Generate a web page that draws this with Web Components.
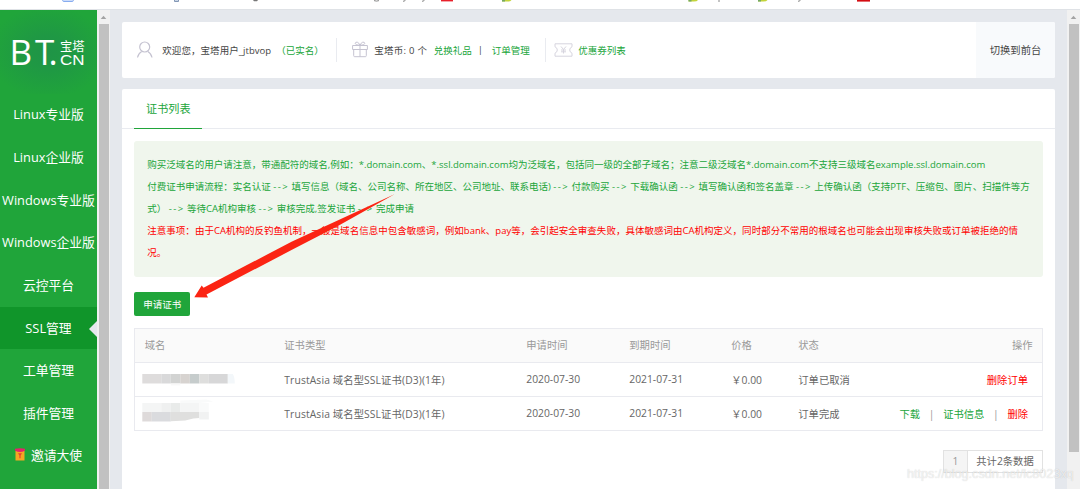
<!DOCTYPE html>
<html lang="zh-CN">
<head>
<meta charset="utf-8">
<title>SSL管理</title>
<style>
  html, body {
    margin: 0;
    height: 489px;
    overflow: hidden;
  }
  body {
    font-family: "Open Sans", "Noto Sans CJK SC", sans-serif;
    font-size: 9.5px;
    color: #444;
    background: #e5e8ed;
  }
</style>
</head>
<body>
<bt-app></bt-app>

<script>
const define = (name, html) => {
  const template = document.createElement("template");
  template.innerHTML = html;
  customElements.define(name, class extends HTMLElement {
    constructor() {
      super();
      this.attachShadow({ mode: "open" }).appendChild(template.content.cloneNode(true));
    }
  });
};

// Bottom edge of the browser's bookmark bar
define("bookmark-strip", `
  <style>
    :host { display: block; height: 9px; background: #fff; border-bottom: 1px solid #dfe2e6; }
    svg { display: block; }
  </style>
  <svg width="1080" height="9" viewBox="0 0 1080 9" fill="none">
    <path d="M62.7 0v.6q0 .8 1 .8h8.6q1 0 1-.8V0" fill="#d6e4fb" stroke="#7ba4ee"/>
    <path d="M174.5 0v1.5h4V0" fill="#c9d5e5" stroke="#8397b5"/>
    <path d="M253 0h5l-1 1.3h-3z" fill="#777"/>
    <path d="M374 .6q2.5 1 5 0M403 1.2q2 .4 2.2-1.2M422 1.2q2 .4 2.2-1.2M719 0v2M798 1.2q2 .4 2.2-1.2" stroke="#888"/>
    <path d="M441 0h12v1.4h-12z" fill="#e8202a"/>
    <path d="M502 0h9.500q-1 1.600-4 1.600h-5.500zM688.500 0h9.500q-1 1.600-4 1.600h-5.500zM758 0h9.500q-1 1.600-4 1.600h-5.500z" fill="#c3d43a"/>
    <path d="M502 0h3v1.600h-3zM688.500 0h3v1.600h-3zM758 0h3v1.600h-3z" fill="#74a864"/>
    <path d="M857 0h13v1.600h-13z" fill="#d40c12"/>
  </svg>
`);

define("scroll-bar", `
  <style>
    :host {
      display: flex;
      flex-direction: column;
      align-items: center;
      box-sizing: border-box;
      width: 13px;
      background: #f1f1f1;
    }
    svg { display: block; flex: none; }
    div { width: 10px; height: var(--thumb, 100%); background: #c1c1c1; }
  </style>
  <svg width="13" height="14"><path d="M3.700 9 6.500 5.700 9.300 9z" fill="#a3a3a3"/></svg>
  <div></div>
`);

define("bt-logo", `
  <style>
    :host {
      display: block;
      height: 83.500px;
      background: radial-gradient(ellipse 60px 46px at 48px 42px, #1f9447, #1f9844 35%, #20a53a);
    }
    svg { display: block; }
    text { fill: #fff; }
  </style>
  <svg width="97" height="83" viewBox="0 10 97 83">
    <text x="9.500 35 48.500" y="65" font-size="35" font-family="Open Sans, sans-serif">BT.</text>
    <text font-family="Liberation Sans, Noto Sans CJK SC, sans-serif"><tspan x="60" y="51" font-size="12.300">宝塔</tspan><tspan x="60" y="65" font-size="14.500" textLength="24.500" lengthAdjust="spacingAndGlyphs">CN</tspan></text>
  </svg>
`);

define("nav-item", `
  <style>
    :host {
      display: flex;
      align-items: center;
      justify-content: center;
      position: relative;
      box-sizing: border-box;
      height: 42.650px;
      padding-bottom: 2px;
      font-size: 12.800px;
      color: #fff;
      white-space: nowrap;
    }
    :host([active]) { background: #10952a; }
    :host([active])::after {
      content: "";
      position: absolute;
      right: 0;
      top: 14px;
      border: solid transparent;
      border-width: 8px 8px 8px 0;
      border-right-color: #e5e8ed;
    }
  </style>
  <slot></slot>
`);

define("side-bar", `
  <style>
    :host { display: block; width: 97px; background: #20a53a; overflow: hidden; }
    svg { margin-right: 6px; }
  </style>
  <bt-logo></bt-logo>
  <nav>
    <nav-item>Linux专业版</nav-item>
    <nav-item>Linux企业版</nav-item>
    <nav-item>Windows专业版</nav-item>
    <nav-item>Windows企业版</nav-item>
    <nav-item>云控平台</nav-item>
    <nav-item active>SSL管理</nav-item>
    <nav-item>工单管理</nav-item>
    <nav-item>插件管理</nav-item>
    <nav-item>
      <svg width="10" height="13" viewBox="0 0 10 13">
        <path d="M.5 3h9v9.500h-9z" fill="#f5a623"/>
        <path d="M0 .8Q5-.4 10 .8v1.700Q5 5.500 0 2.500z" fill="#e4236b"/>
        <path d="M3 5.300h4L5.600 7.500v2.700H4.400V7.500z" fill="#e8442e"/>
      </svg>邀请大使
    </nav-item>
  </nav>
`);

define("user-bar", `
  <style>
    :host {
      display: flex;
      align-items: center;
      height: 55.500px;
      padding-left: 14px;
      border-radius: 2px;
      background: #fff;
      white-space: nowrap;
      overflow: hidden;
    }
    svg { display: block; flex: none; }
    a { color: #20a53a; }
    i { width: 1px; height: 24px; background: #e9ebf0; }
    .switch {
      display: flex;
      align-items: center;
      justify-content: center;
      width: 79px;
      height: 100%;
      margin-left: auto;
      font-size: 10.300px;
      background: #f8fafc;
    }
  </style>
  <svg width="18" height="18" viewBox="0 0 18 18" fill="none" stroke="#c5c3d1" stroke-width="1.200">
    <circle cx="8.700" cy="6" r="5"/><path d="M1.500 16.500q.7-4 4.200-6M16 16.500q-.7-4-4.200-6"/>
  </svg>
  <span style="width:118px;margin-left:8px;letter-spacing:.06px">欢迎您，宝塔用户_jtbvop</span>
  <a style="width:60px;margin-left:-4px">（已实名）</a>
  <i></i>
  <svg style="margin-left:15px" width="16" height="17" viewBox="0 0 16 17" fill="none" stroke="#c5c3d1">
    <path d="M.6 4.500h14.800v4H.6zM1.700 8.500h12.600v6.200q0 1-1 1H2.700q-1 0-1-1zM8 4.500v11.200M8 4.300Q3.200 4.300 3.200 2.300 3.500.8 5.300 1.200 7 1.700 8 4.300 9 1.700 10.700 1.200q1.800-.4 2.100 1.100 0 2-4.800 2"/>
  </svg>
  <span style="width:59.500px;margin-left:6px;letter-spacing:.25px">宝塔币: 0 个</span>
  <a style="width:44px">兑换礼品</a>
  <span style="width:14px">|</span>
  <a style="width:53.500px">订单管理</a>
  <i></i>
  <svg style="margin-left:7.500px" width="19" height="14" viewBox="0 0 19 14" fill="none" stroke="#d6d4de">
    <path d="M1 .8h17v3q-2.300 1-2.300 3.200T18 10.200v3H1v-3Q3.300 9.200 3.300 7T1 3.800z"/>
    <path d="M7 3.500 9.500 6.500 12 3.500M9.500 6.500v4M7 7h5M7 8.800h5"/>
  </svg>
  <a style="margin-left:5.500px">优惠券列表</a>
  <span class="switch">切换到前台</span>
`);

define("notice-box", `
  <style>
    :host {
      display: block;
      box-sizing: border-box;
      height: 136.500px;
      padding: 13.500px 0 0 13px;
      border-radius: 3px;
      background: #f0f6ed;
      color: #20a53a;
      line-height: 22px;
      white-space: nowrap;
    }
    p { margin: 0; }
    i { font-style: normal; letter-spacing: 1.420px; }
    .warn { color: #f00; letter-spacing: .016px; }
  </style>
  <p>购买泛域名的用户请注意，带通配符的域名,例如：*.domain.com、*.ssl.domain.com均为泛域名，包括同一级的全部子域名；注意二级泛域名*.domain.com不支持三级域名example.ssl.domain.com</p>
  <p>付费证书申请流程：实名认证 <i>--&gt;</i> 填写信息（域名、公司名称、所在地区、公司地址、联系电话) <i>--&gt;</i> 付款购买 <i>--&gt;</i> 下载确认函 <i>--&gt;</i> 填写确认函和签名盖章 <i>--&gt;</i> 上传确认函（支持PTF、压缩包、图片、扫描件等方<br>式） <i>--&gt;</i> 等待CA机构审核 <i>--&gt;</i> 审核完成,签发证书 <i>--&gt;</i> 完成申请</p>
  <p class="warn">注意事项：由于CA机构的反钓鱼机制，一般是域名信息中包含敏感词，例如bank、pay等，会引起安全审查失败，具体敏感词由CA机构定义，同时部分不常用的根域名也可能会出现审核失败或订单被拒绝的情<br>况。</p>
`);

define("cert-row", `
  <style>
    :host {
      display: grid;
      box-sizing: border-box;
      grid-template-columns: 139.500px 242px 103px 102px 67px 1fr;
      align-items: center;
      height: 34px;
      padding: 0 14px 1.500px 9.500px;
      border-bottom: 1px solid #e9eaef;
      color: #666;
      white-space: nowrap;
    }
    :host([head]) { background: #fafafa; color: #999; padding-right: 9.500px; }
    .last { display: flex; justify-content: space-between; }
  </style>
  <slot name="domain"></slot>
  <slot name="type"></slot>
  <slot name="from"></slot>
  <slot name="to"></slot>
  <slot name="price"></slot>
  <div class="last"><slot name="state"></slot><slot name="ops"></slot></div>
`);

define("cert-table", `
  <style>
    :host { display: block; border: 1px solid #e9eaef; border-bottom: 0; font-size: 10.300px; }
    svg { display: block; margin-left: -9.500px; }
    [slot="type"] { letter-spacing: .13px; }
    a { color: #20a53a; }
    a.del { color: #f00; }
    i { font-style: normal; color: #999; margin: 0 8.700px; }
  </style>
  <cert-row head>
    <span slot="domain">域名</span><span slot="type" style="letter-spacing:0">证书类型</span>
    <span slot="from">申请时间</span><span slot="to">到期时间</span>
    <span slot="price">价格</span><span slot="state">状态</span><span slot="ops">操作</span>
  </cert-row>
  <cert-row>
    <svg slot="domain" width="110" height="32">
      <path d="M7.300 11h19v9.500h-19z" fill="#dedcdc"/><path d="M26.300 11h9.500v9.500h-9.500z" fill="#d9d9da"/>
      <path d="M35.800 11h9.500v9.500h-9.500z" fill="#d2d3d2"/><path d="M45.300 11h9.500v9.500h-9.500z" fill="#d7d3d0"/>
      <path d="M54.800 11h9.500v9.500h-9.500z" fill="#c6cccc"/><path d="M64.300 11h9.500v9.500h-9.500z" fill="#dededd"/>
      <path d="M73.800 11h19v9.500h-19z" fill="#d7d7d8"/><path d="M92.800 11h5q2 3 2 9.500h-7z" fill="#f3f7fa"/>
      <path d="M35.800 20.500h9.500v2h-9.500z" fill="#f8f8f8"/>
    </svg>
    <span slot="type">TrustAsia 域名型SSL证书(D3)(1年)</span>
    <span slot="from">2020-07-30</span><span slot="to">2021-07-31</span>
    <span slot="price">￥0.00</span><span slot="state">订单已取消</span>
    <span slot="ops"><a class="del">删除订单</a></span>
  </cert-row>
  <cert-row>
    <svg slot="domain" width="110" height="32">
      <path d="M7.300 6h19v9H7.300z" fill="#f4f5f5"/><path d="M26.300 6h9.500v9h-9.500z" fill="#eff0f0"/>
      <path d="M35.800 6h9.500v9h-9.500z" fill="#e9ebea"/><path d="M45.300 6h19v9h-19z" fill="#f4f5f5"/>
      <path d="M64.300 6h9.500v9h-9.500zM45.300 3.500l26-1 7 2-14 1.500h-19z" fill="#f9fafa"/>
      <path d="M7.300 15h9.500v9.500H7.300z" fill="#dedada"/><path d="M16.800 15h19v9.500h-19z" fill="#dadbde"/>
      <path d="M35.800 15h28.500v6l-6 .5-8 2-14.500.7z" fill="#dfdfde"/><path d="M64.300 15h9.500v7.500h-9.500z" fill="#f1f2f2"/>
    </svg>
    <span slot="type">TrustAsia 域名型SSL证书(D3)(1年)</span>
    <span slot="from">2020-07-30</span><span slot="to">2021-07-31</span>
    <span slot="price">￥0.00</span><span slot="state">订单完成</span>
    <span slot="ops"><a>下载</a><i>|</i><a>证书信息</a><i>|</i><a class="del">删除</a></span>
  </cert-row>
`);

define("page-nav", `
  <style>
    :host {
      display: flex;
      width: max-content;
      margin: 19px 0 0 auto;
      border: 1px solid #e2e2e2;
      font-size: 10.300px;
      line-height: 21px;
      color: #666;
    }
    b { width: 23px; font-weight: 400; text-align: center; color: #999; background: #f5f5f5; border-right: 1px solid #e2e2e2; }
    span { width: 74px; text-align: center; }
  </style>
  <b>1</b><span>共计2条数据</span>
`);

define("cert-panel", `
  <style>
    :host { display: block; background: #fff; border-radius: 2px 2px 0 0; }
    header { display: flex; height: 39px; padding-left: 12px; border-bottom: 1px solid #e9ebf0; }
    header span {
      box-sizing: border-box;
      width: 68px;
      height: 40px;
      border-bottom: 1px solid #20a53a;
      line-height: 40px;
      text-align: center;
      font-size: 11.100px;
      color: #20a53a;
    }
    section { padding: 11.500px 12px 0; }
    button {
      display: block;
      width: 56px;
      height: 24px;
      margin: 15px 0 12px;
      padding: 0;
      border: 0;
      border-radius: 2px;
      background: #20a53a;
      color: #fff;
      font: inherit;
    }
  </style>
  <header><span>证书列表</span></header>
  <section>
    <notice-box></notice-box>
    <button>申请证书</button>
    <cert-table></cert-table>
    <page-nav></page-nav>
  </section>
`);

define("bt-app", `
  <style>
    :host { display: flex; flex-direction: column; position: relative; width: 1080px; height: 489px; overflow: hidden; }
    .body { display: flex; flex: 1; min-height: 0; }
    main { display: flex; flex-direction: column; flex: 1; min-width: 0; padding: 12px 12px 0 12.300px; gap: 11.500px; }
    cert-panel { flex: 1; min-height: 0; }
    .arrow { position: absolute; left: 0; top: 0; pointer-events: none; }
    .mark {
      position: absolute;
      left: 907px;
      top: 465px;
      font: 12.600px/18px "Liberation Sans", sans-serif;
      color: rgba(255, 255, 255, .7);
      text-shadow: 0 0 1px rgba(0, 0, 0, .22);
      white-space: nowrap;
    }
  </style>
  <bookmark-strip></bookmark-strip>
  <div class="body">
    <side-bar></side-bar>
    <scroll-bar></scroll-bar>
    <main>
      <user-bar></user-bar>
      <cert-panel></cert-panel>
    </main>
    <scroll-bar style="--thumb:428px"></scroll-bar>
  </div>
  <svg class="arrow" width="420" height="310">
    <path d="M394.500 194.300 292 241.500 203.500 287.800 201.700 285.500 194.300 297.200 208 297.500 206.500 294.500 292 249.800 337 226.500z" fill="#fb2413"/>
  </svg>
  <div class="mark">https://blog.csdn.net/lc8023xq</div>
`);
</script>
</body>
</html>
